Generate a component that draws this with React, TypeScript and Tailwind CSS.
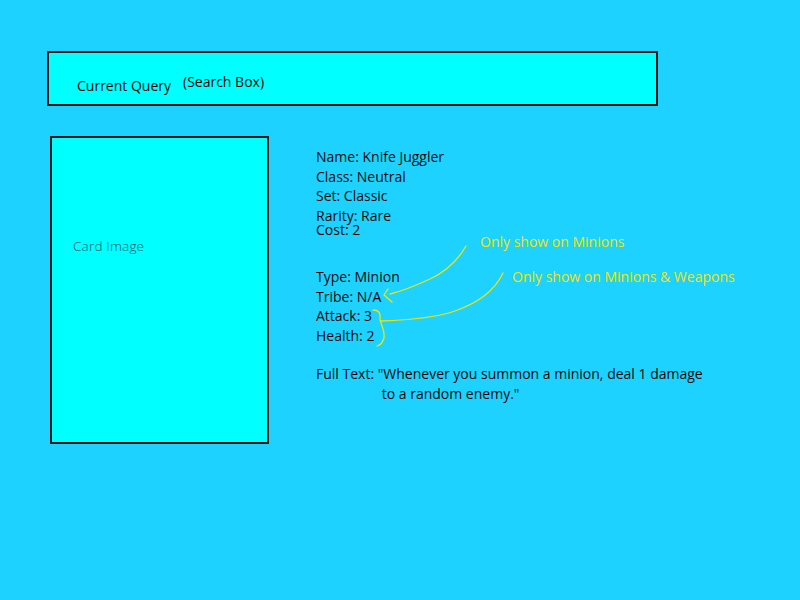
const font = { fontFamily: '"Open Sans", "Liberation Sans", sans-serif' };

const topFields = [
  { label: 'Name', value: 'Knife Juggler', cls: 'h-[20px] leading-[20px]' },
  { label: 'Class', value: 'Neutral', cls: 'h-[19px] leading-[20px]' },
  { label: 'Set', value: 'Classic', cls: 'h-[20px] leading-[20px]' },
  { label: 'Rarity', value: 'Rare', cls: 'mt-[3px] h-[14px] leading-[14px]' },
  { label: 'Cost', value: '2', cls: 'h-[14px] leading-[14px]' },
];

const minionFields = [
  { label: 'Type', value: 'Minion' },
  { label: 'Tribe', value: 'N/A' },
  { label: 'Attack', value: '3' },
  { label: 'Health', value: '2' },
];

function Annotations() {
  return (
    <>
      <svg className="absolute inset-0 pointer-events-none" width="800" height="600" viewBox="0 0 800 600" fill="none">
        <g stroke="#f2e400" strokeWidth="1.3" strokeLinecap="round" strokeLinejoin="round">
          <path d="M466 246 C458 260 445 272 430 279 C415 286 402 291 390 294" />
          <path d="M388 289 L384 295 L392 302" />
          <path d="M503 273 C495 290 478 303 455 311 C435 318 410 320 381 321" />
          <path d="M373 310 C378 310 381 312 380 320 C382 326 385 332 384 338 C383 342 380 345 377 346" />
        </g>
      </svg>
      <div className="absolute left-[480px] top-[233px] text-[14px] leading-[18px] text-[#f2e400] whitespace-nowrap" style={font}>
        Only show on Minions
      </div>
      <div className="absolute left-[512px] top-[268px] text-[14px] leading-[18px] text-[#f2e400] whitespace-nowrap" style={font}>
        Only show on Minions &amp; Weapons
      </div>
    </>
  );
}

export default function App() {
  return (
    <div className="relative w-[800px] h-[600px] bg-[#1ed2ff] overflow-hidden text-[#0a0a0a]" style={font}>
      {/* Search box */}
      <div className="ml-[47px] pt-[51px]">
        <div className="w-[611px] h-[55px] border-2 border-[#1a1a1a] bg-[#00ffff] flex items-start pl-[28px] pt-[22px] text-[14px]">
          <span>Current Query</span>
          <span className="ml-[12px] -mt-[4px]">(Search Box)</span>
        </div>
      </div>

      <div className="flex mt-[30px] ml-[50px]">
        {/* Card */}
        <div className="w-[219px] h-[308px] border-2 border-[#1a1a1a] bg-[#00ffff] pl-[21px] pt-[98px]">
          <div className="text-[13.5px] text-[#124f5e] font-light tracking-[0.2px]">Card Image</div>
        </div>

        {/* Details */}
        <div className="ml-[47px] pt-[11px] text-[14px]">
          {topFields.map((f) => (
            <div key={f.label} className={f.cls}>
              {f.label}: {f.value}
            </div>
          ))}
          <div className="h-[30px]" />
          {minionFields.map((f) => (
            <div key={f.label} className="h-[19.5px] leading-[20px]">
              {f.label}: {f.value}
            </div>
          ))}
          <div className="h-[19px]" />
          <div className="flex leading-[20px]">
            <span className="whitespace-pre">Full Text: </span>
            <span className="w-[360px]">
              "Whenever you summon a minion, deal 1 damage
              <br />
              <span className="pl-[4px]">to a random enemy."</span>
            </span>
          </div>
        </div>
      </div>

      <Annotations />
    </div>
  );
}
